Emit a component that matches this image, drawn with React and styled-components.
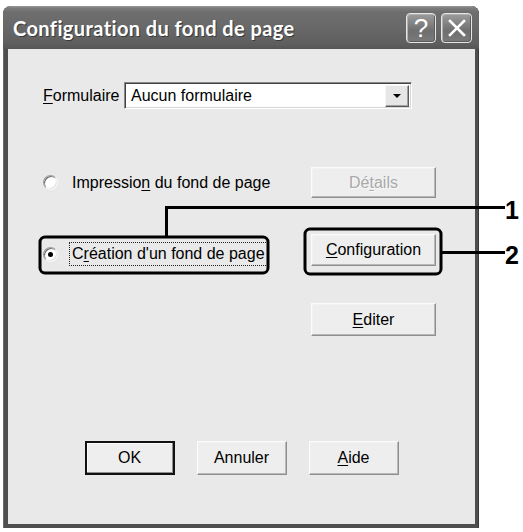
import React from "react";
import styled, { createGlobalStyle, css } from "styled-components";

const Global = createGlobalStyle`
  html, body { margin: 0; padding: 0; background: #ffffff; }
  body { width: 523px; height: 532px; overflow: hidden; }
  #root { width: 523px; height: 532px; }
`;

const Page = styled.div`
  position: relative;
  width: 523px;
  height: 532px;
  padding: 6px 0 0 3px;
  box-sizing: border-box;
  font-family: "Liberation Sans", Arial, sans-serif;
  font-size: 16px;
  color: #000;
`;

const Window = styled.div`
  width: 476px;
  height: 522px;
  display: flex;
  flex-direction: column;
  background: #4e4e4e;
  border-radius: 8px 8px 0 0;
  padding: 0 4px 4px 5px;
  box-sizing: border-box;
  box-shadow: inset 1px 0 #6a6a6a, inset -1px 0 #3a3a3a;
`;

const TitleBar = styled.div`
  height: 43px;
  flex: none;
  margin: 0 -4px 0 -5px;
  padding: 0 7px 0 10px;
  border-radius: 8px 8px 0 0;
  display: flex;
  align-items: center;
  justify-content: space-between;
  background: linear-gradient(
    to bottom,
    #9a9a9a 0px,
    #7c7c7c 2px,
    #6e6e6e 6px,
    #686868 22px,
    #5e5e5e 38px,
    #555555 43px
  );
`;

const Title = styled.span`
  font-family: "Lato", "Liberation Sans", sans-serif;
  font-weight: 700;
  font-size: 20px;
  color: #ffffff;
  letter-spacing: 0.4px;
  text-shadow: 1px 1px #3a3a3a;
  margin-top: 1px;
`;

const CaptionGroup = styled.div`
  display: flex;
  gap: 5px;
  margin-top: 1px;
`;

const CaptionButton = styled.div`
  width: ${(p) => p.$w}px;
  height: 30px;
  box-sizing: border-box;
  border: 1px solid #e6e6e6;
  border-radius: 4px;
  background: linear-gradient(to bottom, #9c9c9c, #6f6f6f 60%, #7a7a7a);
  box-shadow: inset 1px 1px #b0b0b0, inset -1px -1px #5a5a5a;
  display: flex;
  align-items: center;
  justify-content: center;
  color: #ffffff;
  font-family: "Liberation Sans", Arial, sans-serif;
  font-weight: 400;
  font-size: 26px;
  line-height: 1;
`;

const Client = styled.div`
  flex: 1;
  background: #e9e9e9;
  display: flex;
  flex-direction: column;
  padding: 33px 0 49px 35px;
  box-sizing: border-box;
`;

const FormRow = styled.div`
  display: grid;
  grid-template-columns: 81px 288px;
  align-items: center;
  height: 27px;
`;

const Mn = styled.span`
  text-decoration: underline;
  text-underline-offset: 2px;
  text-decoration-thickness: 1px;
`;

const Combo = styled.div`
  height: 27px;
  box-sizing: border-box;
  background: #ffffff;
  border: 1px solid;
  border-color: #8a8a8a #ffffff #ffffff #8a8a8a;
  box-shadow: inset 1px 1px #404040, inset -1px -1px #d6d6d6;
  display: flex;
  align-items: center;
  justify-content: space-between;
  padding: 2px 2px 2px 6px;
`;

const ComboArrow = styled.div`
  width: 24px;
  height: 22px;
  box-sizing: border-box;
  background: #e6e6e6;
  border: 1px solid;
  border-color: #f8f8f8 #5a5a5a #5a5a5a #f8f8f8;
  box-shadow: inset -1px -1px #a0a0a0;
  display: flex;
  align-items: center;
  justify-content: center;
  &::after {
    content: "";
    border-left: 4px solid transparent;
    border-right: 4px solid transparent;
    border-top: 4px solid #000;
    margin-top: 1px;
  }
`;

const Options = styled.div`
  margin-top: 58px;
  display: grid;
  grid-template-columns: 268px 125px;
  grid-template-rows: 31px 33px 33px;
  row-gap: 36px;
`;

const RadioRow = styled.label`
  display: flex;
  align-items: center;
  gap: 11px;
  ${(p) =>
    p.$drop &&
    css`
      padding-top: 7px;
    `}
`;

const Radio = styled.span`
  width: 15px;
  height: 15px;
  flex: none;
  box-sizing: border-box;
  border-radius: 50%;
  background: #ffffff;
  border: 1px solid;
  border-color: #a0a0a0 #f6f6f6 #f6f6f6 #a0a0a0;
  box-shadow: inset 1px 1px #6a6a6a, inset -1px -1px #e2e2e2;
  display: flex;
  align-items: center;
  justify-content: center;
  &::after {
    content: "";
    width: 5px;
    height: 5px;
    border-radius: 50%;
    background: ${(p) => (p.$checked ? "#000" : "transparent")};
  }
`;

const RadioText = styled.span`
  padding: 2px 2px 3px;
  border: 1px dotted ${(p) => (p.$focused ? "#222" : "transparent")};
  line-height: 17px;
  white-space: nowrap;
`;

const Button = styled.div`
  box-sizing: border-box;
  width: ${(p) => p.$w || 125}px;
  height: ${(p) => p.$h || 32}px;
  background: #eeeeee;
  border: 1px solid;
  border-color: #fbfbfb #8e8e8e #8e8e8e #fbfbfb;
  box-shadow: inset -1px -1px #b9b9b9, inset 1px 1px #f2f2f2;
  display: flex;
  align-items: center;
  justify-content: center;
  color: ${(p) => (p.$disabled ? "#a9a9a9" : "#000")};
  text-shadow: ${(p) => (p.$disabled ? "1px 1px #fafafa" : "none")};
  ${(p) =>
    p.$default &&
    css`
      border: 2px solid #111;
      box-shadow: inset -1px -1px #8e8e8e, inset 1px 1px #fbfbfb;
    `}
`;

const Empty = styled.div``;

const Footer = styled.div`
  margin-top: auto;
  margin-left: -35px;
  display: flex;
  justify-content: center;
  gap: 22px;
`;

const Overlay = styled.svg`
  position: absolute;
  left: 0;
  top: 0;
  pointer-events: none;
`;

const CalloutNumber = styled.span`
  position: absolute;
  left: ${(p) => p.$x}px;
  top: ${(p) => p.$y}px;
  font-family: "Liberation Sans", Arial, sans-serif;
  font-weight: 700;
  font-size: 25px;
  line-height: 1;
  color: #000;
`;

export default function App() {
  return (
    <>
      <Global />
      <Page>
        <Window>
          <TitleBar>
            <Title>Configuration du fond de page</Title>
            <CaptionGroup>
              <CaptionButton $w={30}>?</CaptionButton>
              <CaptionButton $w={31}>
                <svg width="18" height="18" viewBox="0 0 18 18">
                  <path d="M2 2 L16 16 M16 2 L2 16" stroke="#fff" strokeWidth="2.6" strokeLinecap="square" />
                </svg>
              </CaptionButton>
            </CaptionGroup>
          </TitleBar>
          <Client>
            <FormRow>
              <span>
                <Mn>F</Mn>ormulaire
              </span>
              <Combo>
                <span>Aucun formulaire</span>
                <ComboArrow />
              </Combo>
            </FormRow>
            <Options>
              <RadioRow>
                <Radio />
                <RadioText>
                  Impressio<Mn>n</Mn> du fond de page
                </RadioText>
              </RadioRow>
              <Button $h={31} $disabled>
                Dé<Mn>t</Mn>ails
              </Button>
              <RadioRow $drop>
                <Radio $checked />
                <RadioText $focused>
                  C<Mn>r</Mn>éation d'un fond de page
                </RadioText>
              </RadioRow>
              <Button>
                <Mn>C</Mn>onfiguration
              </Button>
              <Empty />
              <Button $h={33}>
                <Mn>E</Mn>diter
              </Button>
            </Options>
            <Footer>
              <Button $w={90} $h={34} $default>
                OK
              </Button>
              <Button $w={90} $h={34}>
                Annuler
              </Button>
              <Button $w={90} $h={34}>
                <Mn>A</Mn>ide
              </Button>
            </Footer>
          </Client>
        </Window>
        <Overlay width="523" height="532" viewBox="0 0 523 532">
          <g fill="none" stroke="#000" strokeWidth="3">
            <rect x="40" y="237" width="228" height="36" rx="5" />
            <path d="M166.5 237 V207.5 H505" />
            <rect x="305" y="229" width="136" height="45" rx="5" />
            <path d="M441 252.5 H505" />
          </g>
        </Overlay>
        <CalloutNumber $x={505} $y={198}>1</CalloutNumber>
        <CalloutNumber $x={505} $y={243}>2</CalloutNumber>
      </Page>
    </>
  );
}
